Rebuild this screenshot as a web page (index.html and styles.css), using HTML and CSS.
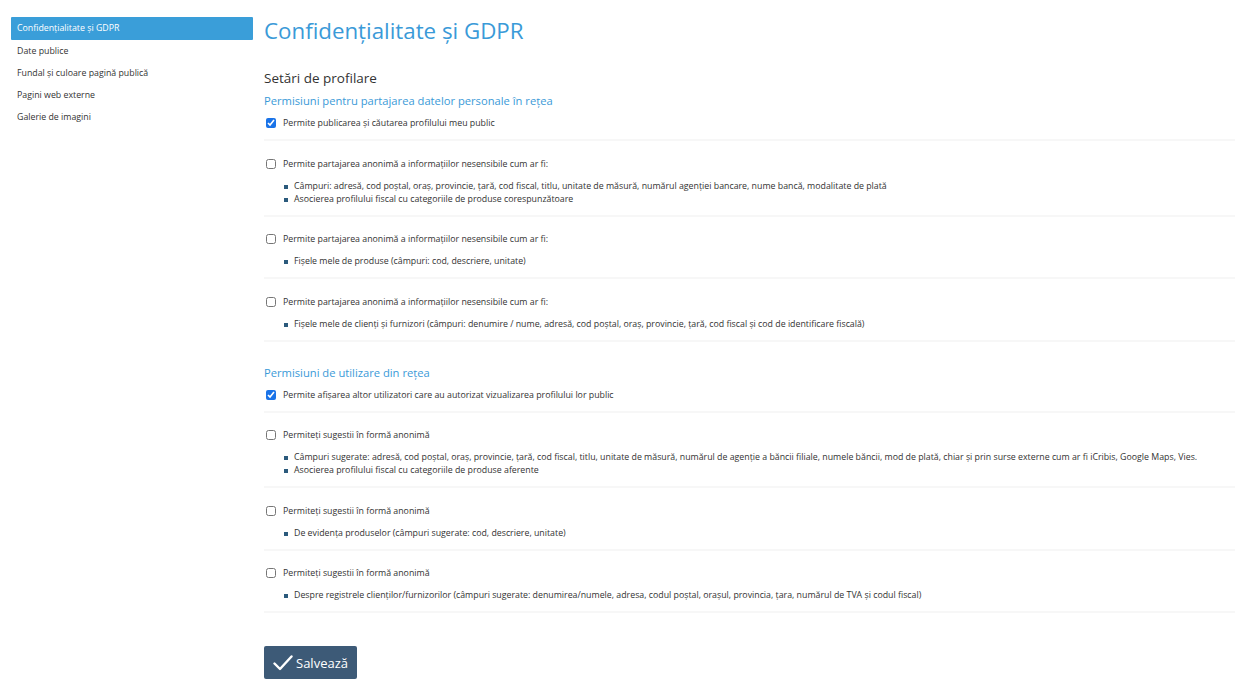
FILE: index.html
```html
<!DOCTYPE html>
<html lang="ro">
<head>
<meta charset="utf-8">
<title>Confidențialitate și GDPR</title>
<link rel="stylesheet" href="styles.css">
</head>
<body>
<div class="layout">
  <nav class="sidebar">
    <a class="nav-item active" href="#">Confidențialitate și GDPR</a>
    <a class="nav-item" href="#">Date publice</a>
    <a class="nav-item" href="#">Fundal și culoare pagină publică</a>
    <a class="nav-item" href="#">Pagini web externe</a>
    <a class="nav-item" href="#">Galerie de imagini</a>
  </nav>
  <main class="main">
    <h1 class="title">Confidențialitate și GDPR</h1>
    <h2 class="section-title">Setări de profilare</h2>

    <h3 class="group-title">Permisiuni pentru partajarea datelor personale în rețea</h3>
    <div class="row">
      <label class="check"><input type="checkbox" checked><span>Permite publicarea și căutarea profilului meu public</span></label>
    </div>
    <div class="row">
      <label class="check"><input type="checkbox"><span>Permite partajarea anonimă a informațiilor nesensibile cum ar fi:</span></label>
      <ul class="bullets">
        <li>Câmpuri: adresă, cod poștal, oraș, provincie, țară, cod fiscal, titlu, unitate de măsură, numărul agenției bancare, nume bancă, modalitate de plată</li>
        <li>Asocierea profilului fiscal cu categoriile de produse corespunzătoare</li>
      </ul>
    </div>
    <div class="row">
      <label class="check"><input type="checkbox"><span>Permite partajarea anonimă a informațiilor nesensibile cum ar fi:</span></label>
      <ul class="bullets">
        <li>Fișele mele de produse (câmpuri: cod, descriere, unitate)</li>
      </ul>
    </div>
    <div class="row">
      <label class="check"><input type="checkbox"><span>Permite partajarea anonimă a informațiilor nesensibile cum ar fi:</span></label>
      <ul class="bullets">
        <li>Fișele mele de clienți și furnizori (câmpuri: denumire / nume, adresă, cod poștal, oraș, provincie, țară, cod fiscal și cod de identificare fiscală)</li>
      </ul>
    </div>

    <h3 class="group-title second">Permisiuni de utilizare din rețea</h3>
    <div class="row">
      <label class="check"><input type="checkbox" checked><span>Permite afișarea altor utilizatori care au autorizat vizualizarea profilului lor public</span></label>
    </div>
    <div class="row">
      <label class="check"><input type="checkbox"><span>Permiteți sugestii în formă anonimă</span></label>
      <ul class="bullets">
        <li>Câmpuri sugerate: adresă, cod poștal, oraș, provincie, țară, cod fiscal, titlu, unitate de măsură, numărul de agenție a băncii filiale, numele băncii, mod de plată, chiar și prin surse externe cum ar fi iCribis, Google Maps, Vies.</li>
        <li>Asocierea profilului fiscal cu categoriile de produse aferente</li>
      </ul>
    </div>
    <div class="row">
      <label class="check"><input type="checkbox"><span>Permiteți sugestii în formă anonimă</span></label>
      <ul class="bullets">
        <li>De evidența produselor (câmpuri sugerate: cod, descriere, unitate)</li>
      </ul>
    </div>
    <div class="row">
      <label class="check"><input type="checkbox"><span>Permiteți sugestii în formă anonimă</span></label>
      <ul class="bullets">
        <li>Despre registrele clienților/furnizorilor (câmpuri sugerate: denumirea/numele, adresa, codul poștal, orașul, provincia, țara, numărul de TVA și codul fiscal)</li>
      </ul>
    </div>

    <div class="actions">
      <button class="btn-save" type="button">
        <svg class="btn-icon" viewBox="0 0 20 16" width="20" height="16" aria-hidden="true"><path d="M1.5 8.5 L7 14 L18.5 1.5" fill="none" stroke="#fff" stroke-width="2.4" stroke-linecap="round" stroke-linejoin="round"/></svg>
        <span>Salvează</span>
      </button>
    </div>
  </main>
</div>
</body>
</html>
```
FILE: styles.css
```css
* { box-sizing: border-box; }
html, body { margin: 0; padding: 0; background: #fff; }
body {
  font-family: "Open Sans", "Noto Sans", "DejaVu Sans", sans-serif;
  color: #333;
  font-size: 8.8px;
}
.layout {
  display: flex;
  align-items: flex-start;
  padding: 17px 0 0 11px;
  gap: 11px;
}
.sidebar {
  width: 242px;
  flex: none;
  display: flex;
  flex-direction: column;
}
.nav-item {
  display: block;
  height: 22px;
  line-height: 22px;
  padding: 0 6px;
  color: #333;
  text-decoration: none;
  font-size: 8.8px;
}
.nav-item.active {
  height: 23px;
  line-height: 23px;
  background: #3a9ed9;
  color: #fff;
  border-radius: 1px;
}
.main {
  flex: 1;
  min-width: 0;
  padding-right: 2px;
}
.title {
  margin: 0;
  font-weight: 400;
  font-size: 22.3px;
  line-height: 28px;
  color: #3a9ad8;
}
.section-title {
  margin: 24px 0 0;
  font-weight: 400;
  font-size: 13.5px;
  line-height: 18px;
  color: #333;
}
.group-title {
  margin: 6px 0 0;
  font-weight: 400;
  font-size: 11.2px;
  line-height: 16px;
  color: #3a9ad8;
}
.group-title.second { margin-top: 23px; }
.row {
  padding: 7px 0 9px;
  border-bottom: 2px solid #f7f7f7;
}
.row + .row { margin-top: 8.5px; }
.check {
  display: flex;
  align-items: center;
  height: 14px;
  line-height: 14px;
  font-size: 8.8px;
  color: #333;
}
.check input {
  width: 10px;
  height: 10px;
  margin: 0 7px 0 2px;
  accent-color: #1a73e8;
}
.bullets {
  margin: 9px 0 0;
  padding-left: 30px;
  list-style: none;
}
.bullets li {
  position: relative;
  line-height: 13px;
  font-size: 8.8px;
  color: #333;
}
.bullets li::before {
  content: "";
  position: absolute;
  left: -10px;
  top: 5px;
  width: 4px;
  height: 4px;
  background: #2b5a7c;
}
.actions { margin-top: 33px; }
.btn-save {
  display: inline-flex;
  align-items: center;
  gap: 3px;
  height: 33px;
  width: 93px;
  padding: 0 9px;
  border: none;
  border-radius: 2px;
  background: #3d5a77;
  color: #fff;
  font-family: "Open Sans", "Noto Sans", sans-serif;
  font-size: 13px;
  cursor: pointer;
}
.btn-icon { flex: none; }
```
